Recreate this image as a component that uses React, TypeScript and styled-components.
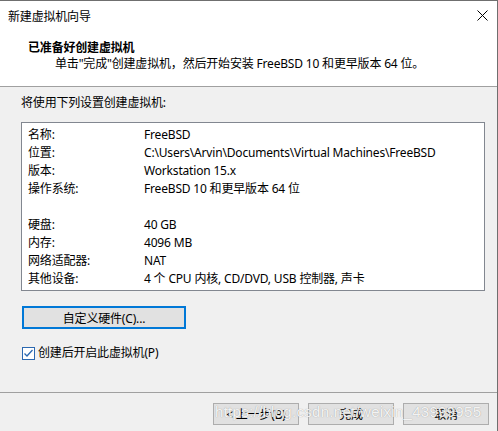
import React from "react";
import styled, { createGlobalStyle } from "styled-components";

const Global = createGlobalStyle`
  html, body { margin: 0; padding: 0; background: #f0f0f0; }
  body {
    font-family: "Segoe UI", "Noto Sans", "Noto Sans CJK SC", sans-serif;
    font-size: 12px;
    letter-spacing: -0.18px;
    color: #000;
  }
`;

const Window = styled.div`
  position: relative;
  width: 498px;
  height: 431px;
  box-sizing: border-box;
  border-top: 1px solid #6f6f6f;
  border-right: 1px solid #6f6f6f;
  display: flex;
  flex-direction: column;
  background: #f0f0f0;
  overflow: hidden;
`;

const TitleBar = styled.div`
  height: 29px;
  background: #fff;
  display: flex;
  align-items: center;
  justify-content: space-between;
  padding: 0 9px 0 8px;
  font-size: 12px;
`;

const Header = styled.div`
  height: 57px;
  background: #fff;
  box-sizing: border-box;
  padding: 9px 0 0 28px;
  border-bottom: 1px solid #a0a0a0;
  display: flex;
  flex-direction: column;
`;

const HeaderTitle = styled.div`
  font-weight: bold;
  line-height: 17px;
`;

const HeaderSub = styled.div`
  padding-left: 27px;
  line-height: 16px;
`;

const Body = styled.div`
  flex: 1;
  display: flex;
  flex-direction: column;
  padding: 8px 12px 0 21px;
`;

const Intro = styled.div`
  line-height: 16px;
`;

const SummaryBox = styled.div`
  margin-top: 11px;
  height: 169px;
  box-sizing: border-box;
  border: 1px solid #828790;
  background: #fff;
  padding: 2px 0 0 6px;
  display: grid;
  grid-template-columns: 116px 1fr;
  grid-auto-rows: 18px;
  align-items: center;
`;

const Label = styled.div``;
const Value = styled.div``;
const Spacer = styled.div`
  grid-column: 1 / span 2;
`;

const CustomButton = styled.button`
  margin-top: 15px;
  width: 164px;
  height: 23px;
  box-sizing: border-box;
  border: 2px solid #0078d7;
  background: #e1e1e1;
  font: inherit;
  letter-spacing: inherit;
  color: #000;
  padding: 0;
  margin-left: 1px;
`;

const CheckRow = styled.label`
  margin-top: 16px;
  display: flex;
  align-items: center;
  gap: 3px;
  margin-left: 1px;
  line-height: 16px;
`;

const CheckBox = styled.span`
  width: 13px;
  height: 13px;
  box-sizing: border-box;
  border: 1px solid #2b68b0;
  background: #fff;
  display: inline-flex;
  align-items: center;
  justify-content: center;
`;

const Footer = styled.div`
  height: 39px;
  border-top: 1px solid #a0a0a0;
  display: flex;
  justify-content: flex-end;
  align-items: flex-start;
  gap: 9px;
  padding: 10px 8px 0 0;
  box-sizing: border-box;
`;

const FooterButton = styled.button`
  width: 86px;
  height: 22px;
  box-sizing: border-box;
  border: 1px solid #adadad;
  background: #e1e1e1;
  font: inherit;
  letter-spacing: inherit;
  color: #000;
  padding: 0;
`;

const Watermark = styled.div`
  position: absolute;
  left: 215px;
  top: 402px;
  font-family: "Liberation Sans", Arial, sans-serif;
  font-size: 15px;
  letter-spacing: 0.3px;
  color: rgba(255, 255, 255, 0.9);
  text-shadow: 0 0 1px rgba(110, 110, 110, 0.7);
  pointer-events: none;
  white-space: nowrap;
`;

const rows: [string, string][] = [
  ["名称:", "FreeBSD"],
  ["位置:", "C:\\Users\\Arvin\\Documents\\Virtual Machines\\FreeBSD"],
  ["版本:", "Workstation 15.x"],
  ["操作系统:", "FreeBSD 10 和更早版本 64 位"],
];
const rows2: [string, string][] = [
  ["硬盘:", "40 GB"],
  ["内存:", "4096 MB"],
  ["网络适配器:", "NAT"],
  ["其他设备:", "4 个 CPU 内核, CD/DVD, USB 控制器, 声卡"],
];

export default function App() {
  return (
    <>
      <Global />
      <Window>
        <TitleBar>
          <span>新建虚拟机向导</span>
          <svg width="11" height="11" viewBox="0 0 11 11">
            <path d="M0.5 0.5 L10.5 10.5 M10.5 0.5 L0.5 10.5" stroke="#000" strokeWidth="1" />
          </svg>
        </TitleBar>
        <Header>
          <HeaderTitle>已准备好创建虚拟机</HeaderTitle>
          <HeaderSub>单击"完成"创建虚拟机，然后开始安装 FreeBSD 10 和更早版本 64 位。</HeaderSub>
        </Header>
        <Body>
          <Intro>将使用下列设置创建虚拟机:</Intro>
          <SummaryBox>
            {rows.map(([l, v]) => (
              <React.Fragment key={l}>
                <Label>{l}</Label>
                <Value>{v}</Value>
              </React.Fragment>
            ))}
            <Spacer />
            {rows2.map(([l, v]) => (
              <React.Fragment key={l}>
                <Label>{l}</Label>
                <Value>{v}</Value>
              </React.Fragment>
            ))}
          </SummaryBox>
          <CustomButton>自定义硬件(C)...</CustomButton>
          <CheckRow>
            <CheckBox>
              <svg width="11" height="11" viewBox="0 0 11 11">
                <path d="M1.5 5.5 L4 8 L9.5 2" stroke="#2b68b0" strokeWidth="1.3" fill="none" />
              </svg>
            </CheckBox>
            <span>创建后开启此虚拟机(P)</span>
          </CheckRow>
        </Body>
        <Footer>
          <FooterButton>&lt; 上一步(B)</FooterButton>
          <FooterButton>完成</FooterButton>
          <FooterButton>取消</FooterButton>
        </Footer>
        <Watermark>https://blog.csdn.net/weixin_43999955</Watermark>
      </Window>
    </>
  );
}
